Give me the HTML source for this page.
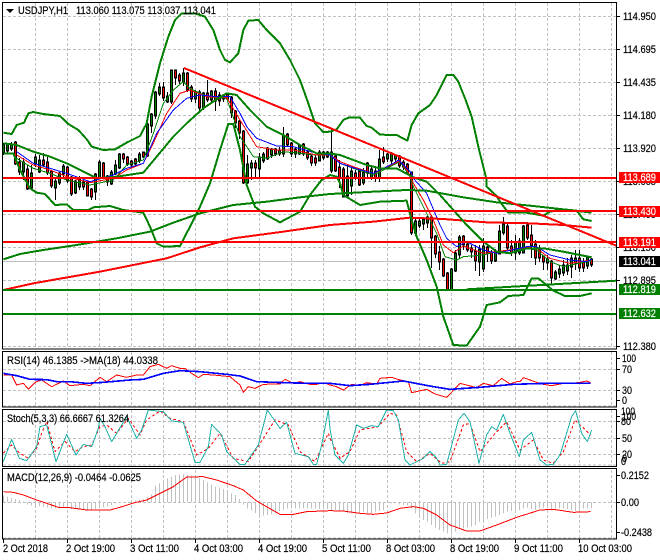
<!DOCTYPE html>
<html><head><meta charset="utf-8"><title>USDJPY,H1</title>
<style>
html,body{margin:0;padding:0;background:#fff;overflow:hidden}
svg{display:block}
text{font-family:"Liberation Sans",sans-serif;font-size:11px;fill:#000;stroke:#000;stroke-width:.2px}
.w{fill:#fff;stroke:#fff}
</style></head><body>
<svg width="660" height="560" viewBox="0 0 660 560" xmlns="http://www.w3.org/2000/svg">
<defs>
<path id="u" d="M3.5 145V152M7.5 145V150M11.5 145V148M23.5 163V171M31.5 174V187M35.5 158V163M39.5 161V171M55.5 182V187M59.5 174V182M63.5 167V173M75.5 182V192M79.5 180V186M95.5 175V191M99.5 163V177M111.5 173V183M115.5 166V173M119.5 155V167M139.5 155V160M147.5 125V155M151.5 115V125M155.5 93V115M159.5 88V93M167.5 97V101M171.5 71V101M183.5 74V81M195.5 93V98M203.5 94V107M211.5 92V99M223.5 96V98M247.5 165V182M251.5 164V167M259.5 158V168M263.5 155V160M271.5 150V154M279.5 151V153M283.5 136V153M295.5 150V153M299.5 146V153M319.5 153V160M323.5 153V157M327.5 153V156M331.5 153V170M347.5 177V195M351.5 172V185M363.5 173V182M371.5 170V177M379.5 160V177M387.5 155V158M391.5 154V160M395.5 156V158M415.5 222V232M419.5 222V225M423.5 220V223M427.5 218V222M451.5 270V289M455.5 254V270M459.5 238V254M479.5 250V261M483.5 247V268M495.5 252V260M499.5 232V253M503.5 225V232M515.5 243V252M519.5 242V252M523.5 227V252M547.5 260V262M555.5 273V278M559.5 270V273M563.5 266V272M567.5 266V270M571.5 259V266M575.5 259V262M587.5 258V265"/>
<path id="d" d="M15.5 143V163M19.5 163V171M27.5 170V188M43.5 161V164M47.5 163V172M51.5 172V185M67.5 168V180M71.5 178V193M83.5 183V186M87.5 183V195M91.5 190V196M103.5 164V177M107.5 177V181M123.5 155V158M127.5 158V163M131.5 162V164M135.5 160V163M143.5 153V156M163.5 88V97M175.5 71V77M179.5 76V80M187.5 74V89M191.5 88V98M199.5 93V107M207.5 94V99M215.5 92V100M219.5 96V100M227.5 95V98M231.5 98V112M235.5 112V122M239.5 122V132M243.5 132V182M255.5 164V167M267.5 149V158M275.5 150V153M287.5 135V144M291.5 144V153M303.5 145V153M307.5 153V157M311.5 157V162M315.5 159V162M335.5 157V170M339.5 168V177M343.5 170V196M355.5 174V177M359.5 172V184M367.5 164V172M375.5 172V177M383.5 158V161M399.5 157V165M403.5 163V166M407.5 165V173M411.5 173V232M431.5 218V237M435.5 237V253M439.5 253V261M443.5 260V275M447.5 274V289M463.5 237V244M467.5 245V249M471.5 249V251M475.5 252V260M487.5 248V252M491.5 253V260M507.5 227V247M511.5 247V252M527.5 226V237M531.5 236V245M535.5 245V257M539.5 250V257M543.5 257V261M551.5 262V277M579.5 259V267M583.5 263V267M591.5 260V264"/>
</defs>

<!-- grid -->
<g stroke="#c0c0c0" stroke-width="1" stroke-dasharray="3 2" fill="none" shape-rendering="crispEdges">
<path d="M3 16.5H616M3 49.5H616M3 82.5H616M3 115.5H616M3 148.5H616M3 181.5H616M3 214.5H616M3 247.5H616M3 280.5H616M3 313.5H616M3 346.5H616"/>
<path d="M3 369.5H616M3 390.5H616M3 406H616M3 421.5H616M3 438.5H616M3 454.5H616M3 465H616M3 502.5H616M3 538H616"/>
<path d="M35.5 3V348M67.5 3V348M99.5 3V348M131.5 3V348M163.5 3V348M195.5 3V348M227.5 3V348M259.5 3V348M291.5 3V348M323.5 3V348M355.5 3V348M387.5 3V348M419.5 3V348M451.5 3V348M483.5 3V348M515.5 3V348M547.5 3V348M579.5 3V348M611.5 3V348"/>
<path d="M35.5 352V406M67.5 352V406M99.5 352V406M131.5 352V406M163.5 352V406M195.5 352V406M227.5 352V406M259.5 352V406M291.5 352V406M323.5 352V406M355.5 352V406M387.5 352V406M419.5 352V406M451.5 352V406M483.5 352V406M515.5 352V406M547.5 352V406M579.5 352V406M611.5 352V406"/>
<path d="M35.5 410V466M67.5 410V466M99.5 410V466M131.5 410V466M163.5 410V466M195.5 410V466M227.5 410V466M259.5 410V466M291.5 410V466M323.5 410V466M355.5 410V466M387.5 410V466M419.5 410V466M451.5 410V466M483.5 410V466M515.5 410V466M547.5 410V466M579.5 410V466M611.5 410V466"/>
<path d="M35.5 470V539M67.5 470V539M99.5 470V539M131.5 470V539M163.5 470V539M195.5 470V539M227.5 470V539M259.5 470V539M291.5 470V539M323.5 470V539M355.5 470V539M387.5 470V539M419.5 470V539M451.5 470V539M483.5 470V539M515.5 470V539M547.5 470V539M579.5 470V539M611.5 470V539"/>
</g>
<!-- bid line -->
<path d="M3 261.5H616" stroke="#c0c0c0" fill="none" shape-rendering="crispEdges"/>

<!-- candles -->
<g fill="none" shape-rendering="crispEdges">
<path stroke="#000" d="M3.5 143V155M7.5 143V153M11.5 142V151M15.5 141V165M19.5 158V175M23.5 158V180M27.5 165V190M31.5 165V190M35.5 154V167M39.5 155V173M43.5 153V167M47.5 156V175M51.5 170V188M55.5 178V200M59.5 172V185M63.5 164V178M67.5 166V183M71.5 176V196M75.5 180V194M79.5 176V190M83.5 180V190M87.5 181V196M91.5 188V200M95.5 173V200M99.5 160V179M103.5 162V179M107.5 175V186M111.5 170V185M115.5 160V175M119.5 153V169M123.5 153V163M127.5 156V166M131.5 160V167M135.5 158V167M139.5 152V163M143.5 152V158M147.5 123V157M151.5 113V133M155.5 91V119M159.5 83V96M163.5 82V101M167.5 92V103M171.5 70V104M175.5 70V85M179.5 73V84M183.5 68V86M187.5 72V92M191.5 85V102M195.5 90V103M199.5 90V112M203.5 92V110M207.5 80V102M211.5 90V104M215.5 88V111M219.5 92V106M223.5 94V102M227.5 93V100M231.5 96V118M235.5 110V128M239.5 120V139M243.5 130V184M247.5 155V184M251.5 160V180M255.5 160V178M259.5 153V178M263.5 152V163M267.5 147V160M271.5 148V158M275.5 148V156M279.5 147V156M283.5 127V157M287.5 133V147M291.5 142V157M295.5 147V158M299.5 144V155M303.5 143V156M307.5 150V160M311.5 155V166M315.5 155V166M319.5 150V161M323.5 151V160M327.5 151V158M331.5 128V173M335.5 155V172M339.5 160V188M343.5 167V197M347.5 165V198M351.5 168V195M355.5 170V180M359.5 170V186M363.5 168V185M367.5 162V178M371.5 166V180M375.5 168V182M379.5 150V182M383.5 147V164M387.5 153V162M391.5 152V165M395.5 154V162M399.5 155V168M403.5 160V170M407.5 163V175M411.5 172V235M415.5 218V236M419.5 218V228M423.5 217V230M427.5 216V228M431.5 215V268M435.5 235V258M439.5 246V270M443.5 258V277M447.5 272V290M451.5 268V290M455.5 250V272M459.5 235V258M463.5 235V250M467.5 243V252M471.5 245V258M475.5 245V271M479.5 245V276M483.5 238V272M487.5 245V262M491.5 250V264M495.5 249V262M499.5 225V254M503.5 217V235M507.5 224V250M511.5 240V256M515.5 235V260M519.5 238V255M523.5 225V253M527.5 222V240M531.5 225V258M535.5 240V265M539.5 245V262M543.5 256V270M547.5 255V270M551.5 260V285M555.5 270V280M559.5 265V278M563.5 260V276M567.5 258V275M571.5 255V278M575.5 250V270M579.5 250V272M583.5 258V272M587.5 256V269M591.5 258V267"/>
<use href="#u" stroke="#000" stroke-width="3" stroke-linecap="square"/>
<use href="#d" stroke="#000" stroke-width="3" stroke-linecap="square"/>
<use href="#u" stroke="#008000" stroke-width="1"/>
<use href="#d" stroke="#f00" stroke-width="1"/>
</g>

<!-- moving averages, drawn in 3x coordinates -->
<g transform="scale(.33333)" fill="none" stroke-linejoin="round" shape-rendering="crispEdges">
<polyline stroke="#008000" stroke-width="3" points="50,475 100,505 150,520 200,540 270,555 340,540 380,495 430,480 460,400 490,310 520,270 550,245 570,265 620,290 680,295 720,410 760,470 800,475 850,455 950,465 990,465 1020,490 1060,505 1120,525 1180,495 1200,485 1230,530 1240,560 1270,620 1310,700 1335,770 1370,780 1390,770 1450,765 1490,755 1580,745 1610,750 1650,785 1690,800 1775,782"/>
<polyline stroke="#f00" stroke-width="3" points="50,465 100,495 150,510 200,530 270,548 340,535 380,510 430,490 460,430 500,340 540,280 570,270 620,290 680,292 720,360 770,440 830,450 880,450 950,465 990,465 1020,485 1060,500 1120,520 1180,492 1200,482 1230,525 1240,550 1270,600 1300,660 1330,735 1360,758 1390,738 1450,760 1490,755 1580,742 1610,745 1650,775 1710,790 1775,780"/>
<polyline stroke="#00f" stroke-width="3" points="50,455 100,490 150,505 200,520 270,545 340,525 380,505 430,490 470,400 520,330 560,295 600,285 650,290 690,290 720,340 740,380 770,415 830,438 880,440 950,460 990,465 1020,490 1065,505 1120,520 1180,490 1195,480 1235,520 1240,535 1280,580 1320,675 1340,715 1370,740 1400,725 1450,750 1490,760 1580,740 1610,740 1650,765 1710,780 1760,785 1775,778"/>
<!-- long MAs -->
<polyline stroke="#f00" stroke-width="6" points="10,870 100,850 300,815 500,775 600,742 700,715 850,695 990,675 1120,665 1230,653 1330,657 1460,667 1590,670 1690,675 1775,683"/>
<polyline stroke="#008000" stroke-width="6" points="10,778 60,762 130,750 230,735 350,715 450,695 520,668 600,640 700,615 800,605 900,592 990,582 1120,575 1220,570 1280,572 1390,592 1490,607 1590,617 1690,628 1775,638"/>
<!-- bollinger -->
<polyline stroke="#008000" stroke-width="6" points="10,398 35,402 50,375 72,368 85,340 100,336 130,342 180,348 205,372 235,390 262,420 275,440 310,450 345,448 380,428 420,408 440,370 455,290 480,190 505,110 525,60 545,40 585,40 615,50 640,90 660,150 675,180 690,187 715,160 730,90 745,62 775,60 800,90 840,130 870,180 900,240 925,310 945,370 970,396 990,395 1010,388 1030,360 1045,353 1080,353 1100,378 1115,383 1140,404 1190,405 1222,422 1235,375 1255,340 1290,315 1310,285 1340,225 1360,225 1375,245 1395,295 1415,350 1435,440 1460,540 1460,560 1490,588 1500,605 1525,638 1545,638 1580,638 1630,647 1650,635 1690,628 1730,632 1750,658 1775,663"/>
<polyline stroke="#008000" stroke-width="6" points="10,430 50,435 100,455 150,470 200,490 260,520 290,535 350,530 430,518 470,470 520,410 560,370 610,325 650,298 680,280 710,285 750,330 800,380 850,405 900,435 950,460 990,460 1020,465 1060,480 1100,495 1140,505 1190,505 1240,532 1280,545 1320,585 1360,630 1400,675 1450,725 1490,755 1530,760 1580,745 1630,745 1690,755 1775,772"/>
<polyline stroke="#008000" stroke-width="6" points="10,460 40,460 60,510 90,565 110,578 135,582 165,615 200,613 220,630 265,630 280,622 330,618 370,630 430,638 450,680 470,730 490,740 540,738 570,680 600,620 630,550 660,450 685,372 700,372 720,450 740,555 765,620 790,640 840,667 900,635 930,585 965,540 990,525 1010,530 1020,550 1030,585 1080,615 1140,605 1220,602 1235,660 1250,710 1280,780 1310,860 1330,950 1360,1035 1400,1037 1440,980 1460,915 1500,907 1525,888 1570,885 1595,835 1615,835 1660,872 1695,888 1740,888 1775,880"/>
<!-- green rising trend -->
<line x1="1400" y1="868" x2="1850" y2="842" stroke="#008000" stroke-width="6"/>
</g>

<!-- levels and trend -->
<g fill="none" shape-rendering="crispEdges" stroke-width="2">
<path stroke="#f00" d="M3 178H617M3 211H617M3 242H617"/>
<path stroke="#008000" d="M3 290H617M3 314H617"/>
<line x1="184" y1="68" x2="617" y2="246" stroke="#f00"/>
</g>

<!-- RSI panel -->
<g transform="translate(0,345) scale(.33333)" fill="none" stroke-linejoin="round" shape-rendering="crispEdges">
<polyline stroke="#f00" stroke-width="3" points="10,90 35,90 50,120 70,115 85,132 105,112 125,105 155,125 190,108 210,122 250,118 270,122 300,97 320,110 350,90 380,97 410,90 430,90 450,65 475,58 500,70 515,62 540,70 555,70 575,85 595,98 610,88 640,90 690,95 720,120 730,142 745,125 765,130 790,118 840,117 855,103 880,115 900,110 930,118 950,118 970,113 990,120 1010,125 1030,135 1055,118 1080,122 1100,113 1130,117 1140,100 1175,97 1200,105 1225,110 1235,143 1280,133 1305,147 1340,157 1380,115 1430,128 1450,115 1480,122 1505,100 1530,117 1550,110 1560,110 1570,98 1610,112 1630,118 1655,122 1690,115 1735,113 1760,108 1772,113"/>
<polyline stroke="#00f" stroke-width="5" points="10,85 50,92 90,103 140,104 170,110 210,110 260,115 310,112 390,105 430,103 490,85 540,77 600,80 680,88 720,93 770,110 850,113 930,115 990,115 1050,122 1110,118 1210,108 1300,125 1350,133 1440,127 1540,118 1640,115 1772,115"/>
</g>

<!-- Stoch panel -->
<g transform="translate(0,345) scale(.33333)" fill="none" stroke-linejoin="round" shape-rendering="crispEdges">
<polyline stroke="#f00" stroke-width="3" stroke-dasharray="8 7" points="10,325 35,300 60,325 85,340 110,310 125,265 140,230 165,320 195,290 225,320 250,305 275,300 300,245 320,240 350,265 385,220 420,270 440,225 480,198 510,220 550,230 590,330 625,310 660,265 700,340 745,350 790,280 825,225 865,240 900,320 945,350 985,265 990,280 1020,340 1050,320 1080,255 1135,245 1170,205 1190,210 1220,320 1250,350 1290,325 1325,355 1350,350 1390,240 1410,235 1440,320 1490,260 1520,230 1560,315 1600,285 1630,345 1660,355 1690,320 1725,225 1772,270"/>
<polyline stroke="#20b2aa" stroke-width="3" points="10,350 35,283 58,340 80,347 110,305 120,245 140,240 168,350 200,268 228,330 250,298 275,305 295,250 300,220 315,245 335,290 380,215 410,280 425,255 445,195 490,200 515,228 550,232 585,352 600,352 625,305 635,238 665,270 680,320 720,358 735,358 775,300 802,195 840,250 860,232 885,325 925,335 940,358 950,358 965,300 985,195 990,252 1005,330 1030,355 1045,330 1070,240 1090,250 1115,242 1135,245 1160,195 1180,197 1195,225 1215,345 1230,360 1270,340 1290,320 1310,340 1320,360 1340,358 1375,225 1392,205 1410,230 1437,355 1460,270 1475,245 1490,255 1510,208 1530,265 1558,335 1570,285 1595,262 1620,345 1640,360 1660,358 1680,330 1715,215 1727,197 1745,265 1762,290 1775,255"/>
</g>

<!-- MACD histogram -->
<path transform="translate(0,345) scale(1,.33333)" stroke="#c0c0c0" fill="none" shape-rendering="crispEdges" d="M3.5 472V452M7.5 472V455M11.5 472V460M15.5 472V462M19.5 472V465M23.5 472V470M27.5 472V478M31.5 472V482M35.5 472V484M39.5 472V484M43.5 472V486M47.5 472V488M51.5 472V490M55.5 472V490M59.5 472V490M63.5 472V488M67.5 472V490M71.5 472V492M75.5 472V492M79.5 472V492M83.5 472V494M87.5 472V496M91.5 472V494M95.5 472V492M99.5 472V490M103.5 472V486M107.5 472V484M111.5 472V480M115.5 472V476M119.5 472V474M123.5 472V474M127.5 472V472M131.5 472V470M135.5 472V466M139.5 472V464M143.5 472V462M147.5 472V456M151.5 472V448M155.5 472V422M159.5 472V415M163.5 472V406M167.5 472V400M171.5 472V395M175.5 472V390M179.5 472V388M183.5 472V388M187.5 472V390M191.5 472V392M195.5 472V394M199.5 472V400M203.5 472V405M207.5 472V412M211.5 472V418M215.5 472V425M219.5 472V428M223.5 472V432M227.5 472V435M231.5 472V445M235.5 472V450M239.5 472V462M243.5 472V478M247.5 472V490M251.5 472V496M255.5 472V504M259.5 472V510M263.5 472V512M267.5 472V510M271.5 472V508M275.5 472V505M279.5 472V498M283.5 472V495M287.5 472V490M291.5 472V490M295.5 472V490M299.5 472V490M303.5 472V490M307.5 472V490M311.5 472V490M315.5 472V490M319.5 472V492M323.5 472V492M327.5 472V492M331.5 472V495M335.5 472V495M339.5 472V498M343.5 472V500M347.5 472V505M351.5 472V505M355.5 472V508M359.5 472V505M363.5 472V500M367.5 472V505M371.5 472V505M375.5 472V500M379.5 472V498M383.5 472V495M387.5 472V470M391.5 472V475M395.5 472V475M399.5 472V478M403.5 472V480M407.5 472V482M411.5 472V490M415.5 472V505M419.5 472V515M423.5 472V525M427.5 472V530M431.5 472V540M435.5 472V548M439.5 472V555M443.5 472V560M447.5 472V565M451.5 472V568M455.5 472V560M459.5 472V550M463.5 472V550M467.5 472V548M471.5 472V545M475.5 472V540M479.5 472V530M483.5 472V525M487.5 472V522M491.5 472V518M495.5 472V515M499.5 472V510M503.5 472V505M507.5 472V500M511.5 472V498M515.5 472V495M519.5 472V495M523.5 472V490M527.5 472V488M531.5 472V492M535.5 472V495M539.5 472V490M543.5 472V488M547.5 472V490M551.5 472V492M555.5 472V490M559.5 472V490M563.5 472V490M567.5 472V492M571.5 472V495M575.5 472V498M579.5 472V495M583.5 472V490M587.5 472V490M591.5 472V490"/>
<!-- MACD signal -->
<polyline transform="translate(0,345) scale(.33333)" fill="none" stroke="#f00" stroke-width="3" stroke-linejoin="round" shape-rendering="crispEdges" points="10,440 40,442 70,450 110,465 140,475 175,487 210,488 260,495 330,495 370,484 400,474 440,465 480,445 520,425 560,396 610,395 650,405 700,422 730,435 770,468 840,508 880,508 920,500 990,497 1030,498 1080,505 1120,508 1160,504 1200,490 1240,485 1270,490 1310,510 1350,540 1400,558 1440,558 1490,540 1550,517 1620,495 1660,493 1720,502 1772,500"/>

<!-- frames -->
<g fill="none" stroke="#000" shape-rendering="crispEdges">
<rect x="2.5" y="2.5" width="614" height="346.5"/>
<rect x="2.5" y="351.5" width="614" height="55.5"/>
<rect x="2.5" y="409.5" width="614" height="57"/>
<rect x="2.5" y="468.5" width="614" height="70.5"/>
<path d="M3.5 539V543M67.5 539V543M131.5 539V543M195.5 539V543M259.5 539V543M323.5 539V543M387.5 539V543M451.5 539V543M515.5 539V543M579.5 539V543"/>
<path d="M617 16.5H620M617 49.5H620M617 82.5H620M617 115.5H620M617 148.5H620M617 181.5H620M617 214.5H620M617 247.5H620M617 280.5H620M617 346.5H620M617 358.5H620M617 369.5H620M617 390.5H620M617 400.5H620M617 416.5H620M617 421.5H620M617 438.5H620M617 454.5H620M617 475.5H620M617 502.5H620M617 532.5H620"/>
</g>

<!-- legend -->
<path d="M6 9H14L10 13Z" fill="#000"/>
<text x="18" y="14" textLength="50" lengthAdjust="spacingAndGlyphs">USDJPY,H1</text>
<text x="76" y="14" textLength="140" lengthAdjust="spacingAndGlyphs">113.060 113.075 113.037 113.041</text>
<text x="7" y="364" textLength="151" lengthAdjust="spacingAndGlyphs">RSI(14) 46.1385  -&gt;MA(18) 44.0338</text>
<text x="7" y="422" textLength="122" lengthAdjust="spacingAndGlyphs">Stoch(5,3,3) 66.6667 61.3264</text>
<text x="7" y="481" textLength="134" lengthAdjust="spacingAndGlyphs">MACD(12,26,9) -0.0464 -0.0625</text>

<!-- price axis -->
<g>
<text x="623" y="20" textLength="33" lengthAdjust="spacingAndGlyphs">114.950</text>
<text x="623" y="53" textLength="33" lengthAdjust="spacingAndGlyphs">114.695</text>
<text x="623" y="86" textLength="33" lengthAdjust="spacingAndGlyphs">114.435</text>
<text x="623" y="119" textLength="33" lengthAdjust="spacingAndGlyphs">114.180</text>
<text x="623" y="152" textLength="33" lengthAdjust="spacingAndGlyphs">113.920</text>
<text x="623" y="185" textLength="33" lengthAdjust="spacingAndGlyphs">113.665</text>
<text x="623" y="218" textLength="33" lengthAdjust="spacingAndGlyphs">113.405</text>
<text x="623" y="251" textLength="33" lengthAdjust="spacingAndGlyphs">113.150</text>
<text x="623" y="284" textLength="33" lengthAdjust="spacingAndGlyphs">112.895</text>
<text x="623" y="350" textLength="33" lengthAdjust="spacingAndGlyphs">112.380</text>
</g>
<g shape-rendering="crispEdges">
<rect x="619" y="172" width="41" height="11" fill="#f00"/>
<rect x="619" y="206" width="41" height="11" fill="#f00"/>
<rect x="619" y="237" width="41" height="11" fill="#f00"/>
<rect x="619" y="256" width="41" height="11" fill="#000"/>
<rect x="619" y="284" width="41" height="11" fill="#008000"/>
<rect x="619" y="308" width="41" height="11" fill="#008000"/>
</g>
<text class="w" x="623" y="181" textLength="33" lengthAdjust="spacingAndGlyphs">113.689</text>
<text class="w" x="623" y="215" textLength="33" lengthAdjust="spacingAndGlyphs">113.430</text>
<text class="w" x="623" y="246" textLength="33" lengthAdjust="spacingAndGlyphs">113.191</text>
<text class="w" x="623" y="265" textLength="33" lengthAdjust="spacingAndGlyphs">113.041</text>
<text class="w" x="623" y="293" textLength="33" lengthAdjust="spacingAndGlyphs">112.819</text>
<text class="w" x="623" y="317" textLength="33" lengthAdjust="spacingAndGlyphs">112.632</text>

<!-- sub axes -->
<text x="622" y="362" textLength="14" lengthAdjust="spacingAndGlyphs">100</text>
<text x="622" y="373" textLength="10" lengthAdjust="spacingAndGlyphs">70</text>
<text x="622" y="394" textLength="10" lengthAdjust="spacingAndGlyphs">30</text>
<text x="622" y="404" textLength="5" lengthAdjust="spacingAndGlyphs">0</text>
<text x="621" y="415" textLength="14" lengthAdjust="spacingAndGlyphs">100</text>
<text x="622" y="420" textLength="14" lengthAdjust="spacingAndGlyphs">100</text>
<text x="621" y="425" textLength="10" lengthAdjust="spacingAndGlyphs">80</text>
<text x="622" y="442" textLength="10" lengthAdjust="spacingAndGlyphs">50</text>
<text x="622" y="458" textLength="10" lengthAdjust="spacingAndGlyphs">20</text>
<text x="622" y="462" textLength="5" lengthAdjust="spacingAndGlyphs">0</text>
<text x="621" y="465" textLength="5" lengthAdjust="spacingAndGlyphs">0</text>
<text x="621" y="479" textLength="28" lengthAdjust="spacingAndGlyphs">0.2152</text>
<text x="621" y="506" textLength="18" lengthAdjust="spacingAndGlyphs">0.00</text>
<text x="621" y="536" textLength="31" lengthAdjust="spacingAndGlyphs">-0.2438</text>

<!-- time axis -->
<text x="3" y="552" textLength="45" lengthAdjust="spacingAndGlyphs">2 Oct 2018</text>
<text x="66" y="552" textLength="49" lengthAdjust="spacingAndGlyphs">2 Oct 19:00</text>
<text x="130" y="552" textLength="49" lengthAdjust="spacingAndGlyphs">3 Oct 11:00</text>
<text x="194" y="552" textLength="49" lengthAdjust="spacingAndGlyphs">4 Oct 03:00</text>
<text x="258" y="552" textLength="49" lengthAdjust="spacingAndGlyphs">4 Oct 19:00</text>
<text x="322" y="552" textLength="49" lengthAdjust="spacingAndGlyphs">5 Oct 11:00</text>
<text x="386" y="552" textLength="49" lengthAdjust="spacingAndGlyphs">8 Oct 03:00</text>
<text x="450" y="552" textLength="49" lengthAdjust="spacingAndGlyphs">8 Oct 19:00</text>
<text x="514" y="552" textLength="49" lengthAdjust="spacingAndGlyphs">9 Oct 11:00</text>
<text x="578" y="552" textLength="54" lengthAdjust="spacingAndGlyphs">10 Oct 03:00</text>
</svg>
</body></html>
